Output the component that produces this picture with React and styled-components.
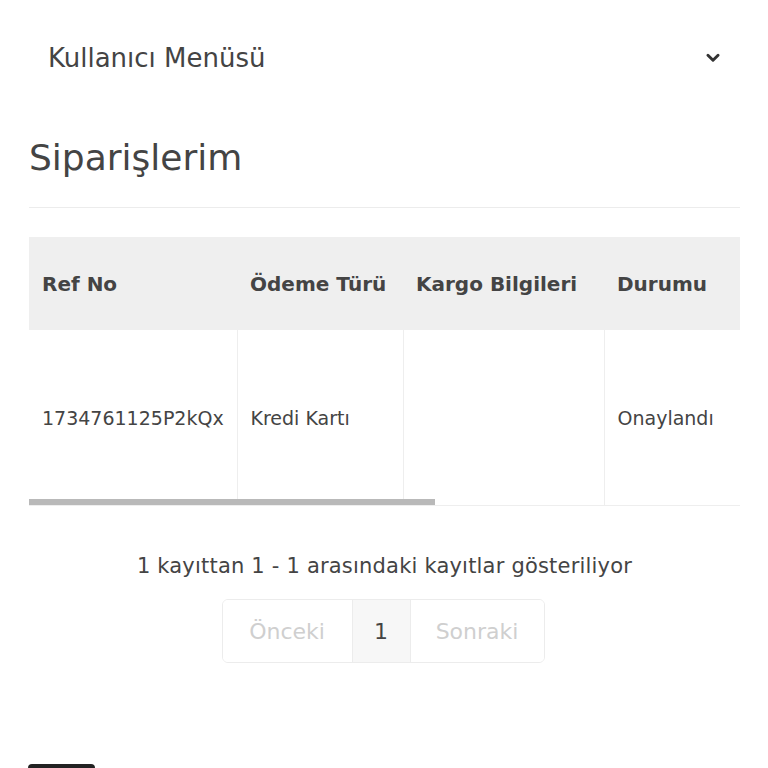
import React from 'react'
import styled, { createGlobalStyle } from 'styled-components'

const GlobalStyle = createGlobalStyle`
  * { box-sizing: border-box; }
  html, body { margin: 0; padding: 0; background: #fff; }
  body {
    font-family: "DejaVu Sans", "Noto Sans", "Liberation Sans", sans-serif;
    color: #444;
    overflow: hidden;
  }
`

const columns = ['Ref No', 'Ödeme Türü', 'Kargo Bilgileri', 'Durumu', 'Tarih', 'Toplam', 'İşlemler']
const widths = [208, 166, 201, 180, 170, 160, 160]
const row = ['1734761125P2kQx', 'Kredi Kartı', '', 'Onaylandı', '21.12.2024', '249,90 TL', 'Detay']

const App = () => {
    return (
        <Page>
            <GlobalStyle />
            <MenuBar>
                <MenuTitle>Kullanıcı Menüsü</MenuTitle>
                <Chevron viewBox="0 0 16 16">
                    <path d="M3.5 5.5 L8 10 L12.5 5.5" fill="none" stroke="#333" strokeWidth="2.6" strokeLinecap="round" strokeLinejoin="round" />
                </Chevron>
            </MenuBar>
            <Heading>Siparişlerim</Heading>
            <Divider />
            <TableScroll>
                <Table>
                    <colgroup>
                        {widths.map((w, i) => <col key={i} style={{ width: w }} />)}
                    </colgroup>
                    <thead>
                        <tr>
                            {columns.map(c => <Th key={c}>{c}</Th>)}
                        </tr>
                    </thead>
                    <tbody>
                        <tr>
                            {row.map((c, i) => <Td key={i}>{c}</Td>)}
                        </tr>
                    </tbody>
                </Table>
                <ScrollThumb />
            </TableScroll>
            <Info>1 kayıttan 1 - 1 arasındaki kayıtlar gösteriliyor</Info>
            <Pager>
                <PageButton $w={129} disabled>Önceki</PageButton>
                <PageButton $w={58} $active>1</PageButton>
                <PageButton $w={134} disabled>Sonraki</PageButton>
            </Pager>
            <Footer>
                <FooterBadge />
            </Footer>
        </Page>
    )
}

const Page = styled.div`
    width: 768px;
    height: 768px;
    padding: 0 28px 0 29px;
    display: flex;
    flex-direction: column;
`

const MenuBar = styled.div`
    display: flex;
    align-items: center;
    justify-content: space-between;
    height: 58px;
    margin-top: 29px;
    padding: 0 18px 0 19px;
`

const MenuTitle = styled.span`
    font-size: 26px;
    color: #444;
`

const Chevron = styled.svg`
    width: 18px;
    height: 18px;
`

const Heading = styled.h2`
    margin: 44px 0 0;
    font-size: 36px;
    font-weight: 400;
    color: #444;
    line-height: 54px;
`

const Divider = styled.div`
    height: 1px;
    background: #ececec;
    margin-top: 22px;
`

const TableScroll = styled.div`
    position: relative;
    margin-top: 29px;
    overflow: hidden;
    border-bottom: 1px solid #eee;
`

const ScrollThumb = styled.div`
    position: absolute;
    left: 0;
    bottom: 0;
    width: 406px;
    height: 6px;
    background: #b9b9b9;
`

const Table = styled.table`
    border-collapse: collapse;
    table-layout: fixed;
    width: 1245px;
`

const Th = styled.th`
    background: #efefef;
    height: 93px;
    padding: 0 13px;
    text-align: left;
    font-size: 20px;
    font-weight: 700;
    color: #444;
    white-space: nowrap;
`

const Td = styled.td`
    height: 175px;
    padding: 0 13px;
    font-size: 19px;
    color: #444;
    white-space: nowrap;
    vertical-align: middle;
    border-left: 1px solid #eee;
    &:first-child { border-left: none; }
`

const Info = styled.div`
    margin-top: 48px;
    text-align: center;
    font-size: 21px;
    letter-spacing: 0.2px;
    color: #444;
`

const Pager = styled.div`
    align-self: center;
    display: flex;
    margin-top: 21px;
    margin-left: -3px;
    border: 1px solid #ececec;
    border-radius: 6px;
    overflow: hidden;
`

const PageButton = styled.div`
    height: 62px;
    width: ${p => p.$w}px;
    display: flex;
    align-items: center;
    justify-content: center;
    font-size: 22px;
    color: ${p => (p.disabled ? '#cfcfcf' : '#444')};
    background: ${p => (p.$active ? '#f7f7f7' : '#fff')};
    border-left: 1px solid #ececec;
    &:first-child { border-left: none; }
`

const Footer = styled.div`
    margin-top: auto;
    height: 4px;
    display: flex;
`

const FooterBadge = styled.div`
    width: 67px;
    height: 6px;
    background: #222;
    border-radius: 4px 4px 0 0;
    margin-left: -1px;
`

export default App
